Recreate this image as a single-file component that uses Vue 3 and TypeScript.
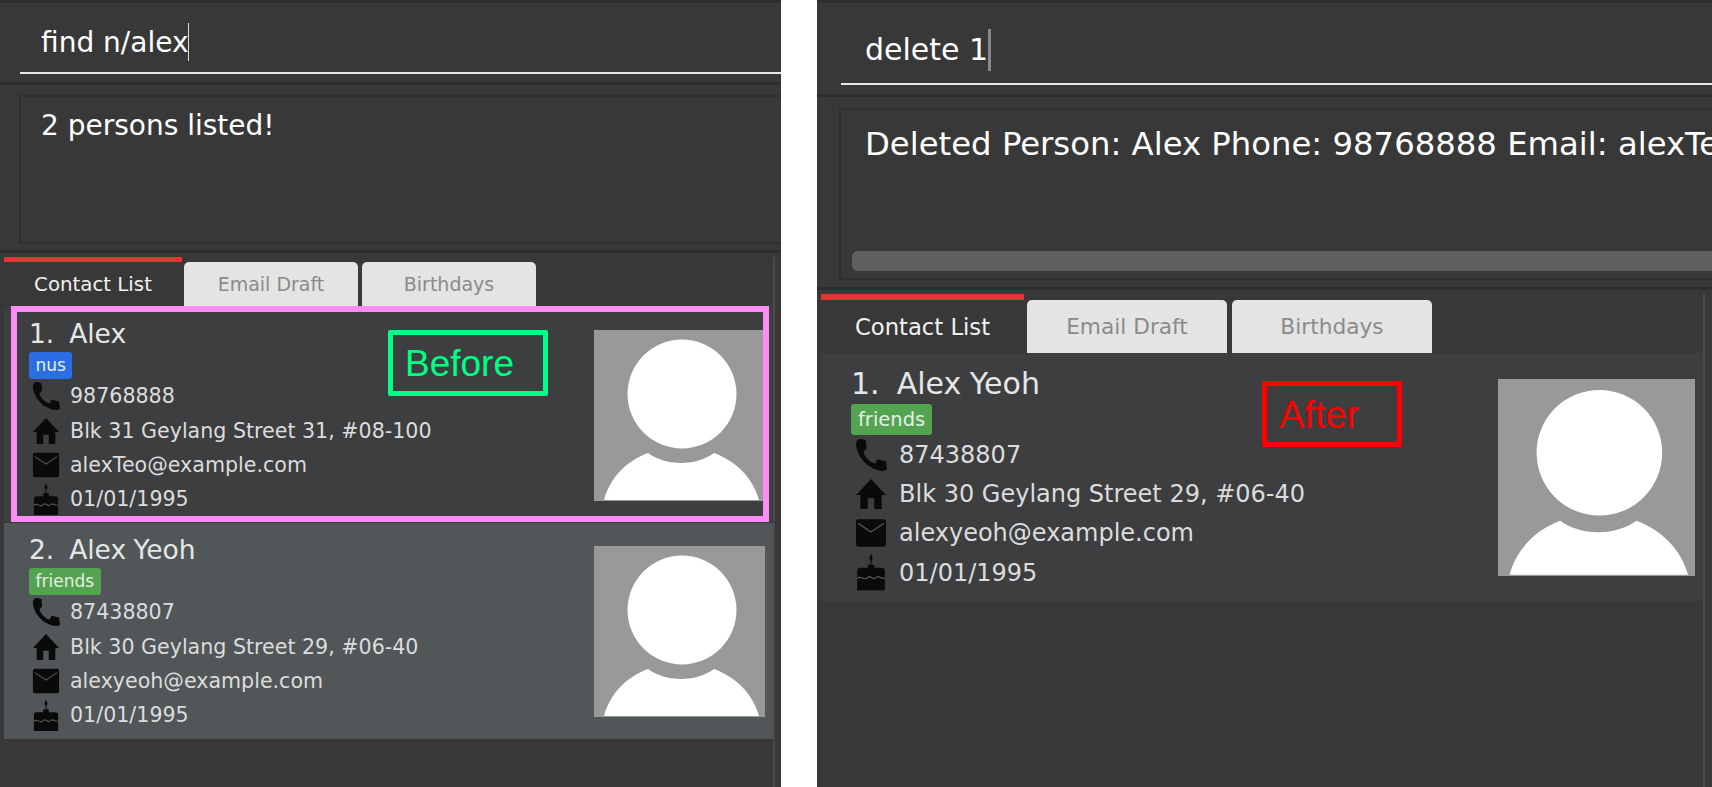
<script setup lang="ts">
interface Person {
    name: string;
    tag: string;
    tagColor: string;
    phone: string;
    address: string;
    email: string;
    birthday: string;
    hovered?: boolean;
}

interface Panel {
    id: string;
    command: string;
    result: string;
    scrollbar: boolean;
    label: string;
    people: Person[];
}

const alex: Person = {
    name: 'Alex',
    tag: 'nus',
    tagColor: '#2a6de4',
    phone: '98768888',
    address: 'Blk 31 Geylang Street 31, #08-100',
    email: 'alexTeo@example.com',
    birthday: '01/01/1995',
};

const yeoh: Person = {
    name: 'Alex Yeoh',
    tag: 'friends',
    tagColor: '#54a351',
    phone: '87438807',
    address: 'Blk 30 Geylang Street 29, #06-40',
    email: 'alexyeoh@example.com',
    birthday: '01/01/1995',
};

const panels: Panel[] = [
    {
        id: 'before',
        command: 'find n/alex',
        result: '2 persons listed!',
        scrollbar: false,
        label: 'Before',
        people: [alex, { ...yeoh, hovered: true }],
    },
    {
        id: 'after',
        command: 'delete 1',
        result: 'Deleted Person: Alex Phone: 98768888 Email: alexTeo@example.com Address: Blk 31 Geylang Street 31, #08-100',
        scrollbar: true,
        label: 'After',
        people: [yeoh],
    },
];
</script>

<template>
    <div class="page">
        <section v-for="panel in panels" :key="panel.id" class="panel" :class="panel.id">
            <div class="command-box">
                <div class="command-line">
                    <span>{{ panel.command }}</span><i class="caret"></i>
                </div>
            </div>

            <div class="result-box">
                <div class="result-inner">
                    <p class="result-text">{{ panel.result }}</p>
                    <div v-if="panel.scrollbar" class="scrollbar"></div>
                </div>
            </div>

            <div class="tab-pane">
                <div class="tabs">
                    <div class="tab active">Contact List</div>
                    <div class="tab">Email Draft</div>
                    <div class="tab">Birthdays</div>
                </div>

                <div class="list">
                    <article v-for="(person, i) in panel.people" :key="person.name" class="card"
                        :class="{ hovered: person.hovered }">
                        <div class="info">
                            <div class="name">{{ i + 1 }}.&nbsp; {{ person.name }}</div>
                            <div class="tag-row">
                                <span class="tag" :style="{ background: person.tagColor }">{{ person.tag }}</span>
                            </div>
                            <div class="row">
                                <span class="icon">
                                    <svg viewBox="0 0 30 30">
                                        <path d="M5 0 L10 1 L11 9 L8 12 C9 17 14 22 19 23 L21 19 L29 21 L30 28 C30 29 28 30 26 30 C13 29 1 17 1 4 C1 2 3 0 5 0 Z" />
                                    </svg>
                                </span>
                                {{ person.phone }}
                            </div>
                            <div class="row">
                                <span class="icon">
                                    <svg viewBox="0 0 30 30">
                                        <path d="M15 1 L29 16 H25 V29 H18 V19 H12 V29 H5 V16 H1 Z" />
                                    </svg>
                                </span>
                                {{ person.address }}
                            </div>
                            <div class="row">
                                <span class="icon">
                                    <svg viewBox="0 0 30 30">
                                        <rect x="1" y="2" width="28" height="26" rx="2" />
                                        <path class="cut" d="M3 6 L15 14 L27 6" />
                                    </svg>
                                </span>
                                {{ person.email }}
                            </div>
                            <div class="row">
                                <span class="icon">
                                    <svg viewBox="0 0 30 34">
                                        <path d="M15 0 C17 3 17 5 15.5 6 L15.5 10 H18 V13 H25 C27 13 28 14 28 16 V34 H2 V16 C2 14 3 13 5 13 H12 V10 H14.5 V6 C13 5 13 3 15 0 Z" />
                                        <path class="cut" d="M2 23 C6 19 8 26 12 22 C15 19 17 26 20 22 C23 19 25 25 28 22" />
                                    </svg>
                                </span>
                                {{ person.birthday }}
                            </div>
                        </div>
                        <svg class="avatar" viewBox="0 0 171 171">
                            <rect width="171" height="171" fill="#999" />
                            <circle cx="88" cy="64" r="54.5" fill="#fff" />
                            <path fill="#fff"
                                d="M10 170 C16 148 32 131 54 123 C62 129 74 133 87 133 C100 133 112 129 120 123 C142 131 159 148 165 170 Z" />
                        </svg>
                    </article>
                </div>
                <div class="pane-edge"></div>
            </div>

            <div class="note">{{ panel.label }}</div>
            <div v-if="panel.id === 'before'" class="selection"></div>
        </section>
    </div>
</template>

<style>
html,
body {
    margin: 0;
    background: #fff;
}
</style>

<style scoped>
.page {
    display: flex;
    gap: 36px;
    height: 787px;
    overflow: hidden;
    font-family: "DejaVu Sans", "Liberation Sans", sans-serif;
}

.panel {
    position: relative;
    display: flex;
    flex-direction: column;
    background: #383838;
    overflow: hidden;
}

.before {
    width: 781px;
    --cmd-h: 85px;
    --cmd-left: 20px;
    --cmd-pad: 21px;
    --cmd-line: 68px;
    --cmd-text-top: 6px;
    --cmd-size: 28px;
    --res-h: 168px;
    --res-margin: 10px 0 6px 19px;
    --res-size: 28px;
    --res-top: 9px;
    --res-pad: 20px;
    --tab-top: 4px;
    --active-w: 178px;
    --tab-w: 174px;
    --tab-h: 44px;
    --tab-gap: 4px;
    --tab-size: 19px;
    --active-size: 19.8px;
    --bar-h: 5px;
    --pane-w: 773px;
    --card-h: 216px;
    --card-left: 25px;
    --name-size: 26.5px;
    --name-line: 32px;
    --name-top: 12px;
    --tag-h: 27px;
    --tag-size: 17px;
    --tag-pad: 6.5px;
    --row-h: 34.4px;
    --row-size: 20.6px;
    --icon-box: 41px;
    --icon-pad: 3px;
    --icon-w: 28px;
    --avatar: 171px;
    --avatar-top: 24px;
}

.after {
    flex: 1;
    --cmd-h: 97px;
    --cmd-left: 24px;
    --cmd-pad: 24px;
    --cmd-line: 79px;
    --cmd-text-top: 10px;
    --cmd-size: 30px;
    --res-h: 193px;
    --res-margin: 11px 0 7px 22px;
    --res-size: 32.3px;
    --res-top: 12px;
    --res-pad: 24px;
    --tab-top: 4px;
    --active-w: 203px;
    --tab-w: 200px;
    --tab-h: 53px;
    --tab-gap: 5px;
    --tab-size: 21.7px;
    --active-size: 22.7px;
    --bar-h: 6px;
    --pane-w: 886px;
    --card-h: 248px;
    --card-left: 30px;
    --name-size: 30px;
    --name-line: 36px;
    --name-top: 13px;
    --tag-h: 31px;
    --tag-size: 19.5px;
    --tag-pad: 7px;
    --row-h: 39.3px;
    --row-size: 24px;
    --icon-box: 48px;
    --icon-pad: 4px;
    --icon-w: 32px;
    --avatar: 197px;
    --avatar-top: 26px;
}

.command-box {
    height: var(--cmd-h);
    flex-shrink: 0;
    box-sizing: border-box;
    padding: 3px 0 0 var(--cmd-left);
    border-top: 3px solid #2e2e2e;
    border-bottom: 3px solid #2e2e2e;
}

.command-line {
    height: var(--cmd-line);
    box-sizing: border-box;
    padding: var(--cmd-text-top) 0 0 var(--cmd-pad);
    border-bottom: 2px solid #e8e8e8;
    display: flex;
    align-items: center;
    color: #fff;
    font-size: var(--cmd-size);
    white-space: nowrap;
}

.caret {
    width: 1px;
    height: 38px;
    background: #ddd;
}

.after .caret {
    width: 3px;
    height: 42px;
    background: #8a8a8a;
}

.result-box {
    height: var(--res-h);
    flex-shrink: 0;
    box-sizing: border-box;
    display: flex;
    border-bottom: 3px solid #2e2e2e;
}

.result-inner {
    flex: 1;
    min-width: 0;
    margin: var(--res-margin);
    border: 2px solid #2f2f2f;
    border-right: none;
    display: flex;
    flex-direction: column;
    overflow: hidden;
}

.result-text {
    flex: 1;
    margin: 0;
    padding: var(--res-top) 0 0 var(--res-pad);
    color: #fff;
    font-size: var(--res-size);
    line-height: 1.4;
    white-space: nowrap;
}

.scrollbar {
    height: 20px;
    margin: 0 0 7px 11px;
    border-radius: 6px 0 0 6px;
    background: #606060;
}

.tab-pane {
    flex: 1;
    display: flex;
    flex-direction: column;
    width: var(--pane-w);
    padding-top: var(--tab-top);
    box-sizing: border-box;
    position: relative;
}

.pane-edge {
    position: absolute;
    top: 4px;
    bottom: 0;
    right: -2px;
    width: 2px;
    background: #4b4b4b;
}

.tabs {
    display: flex;
    align-items: flex-end;
    gap: var(--tab-gap);
    padding-left: 4px;
    flex-shrink: 0;
}

.tab {
    width: var(--tab-w);
    height: var(--tab-h);
    display: flex;
    align-items: center;
    justify-content: center;
    border-radius: 5px 5px 0 0;
    background: #e4e4e4;
    color: #8b8b8b;
    font-size: var(--tab-size);
}

.tab.active {
    width: var(--active-w);
    height: calc(var(--tab-h) + var(--bar-h));
    box-sizing: border-box;
    margin-right: -2px;
    border-top: var(--bar-h) solid #e53431;
    border-radius: 0;
    background: transparent;
    color: #f2f2f2;
    font-size: var(--active-size);
}

.list {
    flex: 1;
    padding-left: 4px;
}

.card {
    height: var(--card-h);
    box-sizing: border-box;
    display: flex;
    justify-content: space-between;
    padding: var(--name-top) 8px 0 var(--card-left);
    background: #3c3e40;
    color: #dcdcdc;
}

.card.hovered {
    background: #515658;
    margin-top: 1px;
    padding-top: calc(var(--name-top) - 1px);
}

.name {
    height: var(--name-line);
    line-height: var(--name-line);
    font-size: var(--name-size);
    word-spacing: -1px;
    color: #e6e6e6;
    white-space: nowrap;
}

.tag-row {
    margin-top: 2px;
    display: flex;
}

.tag {
    height: var(--tag-h);
    line-height: var(--tag-h);
    padding: 0 var(--tag-pad);
    border-radius: 3px;
    color: #e4efe4;
    font-size: var(--tag-size);
}

.row {
    height: var(--row-h);
    display: flex;
    align-items: center;
    font-size: var(--row-size);
    white-space: nowrap;
}

.icon {
    width: var(--icon-box);
    flex-shrink: 0;
    display: flex;
    padding-left: var(--icon-pad);
    box-sizing: border-box;
}

.icon svg {
    width: var(--icon-w);
    fill: #0a0a0a;
}

.cut {
    fill: none;
    stroke: #555;
    stroke-width: 1.2;
}

.avatar {
    width: var(--avatar);
    height: var(--avatar);
    margin-top: calc(var(--avatar-top) - var(--name-top));
    flex-shrink: 0;
}

.note {
    position: absolute;
    box-sizing: border-box;
    height: 66px;
    display: flex;
    align-items: center;
    padding-top: 2px;
    border: 5px solid;
    border-radius: 2px;
    font-family: "Liberation Sans", sans-serif;
}

.before .note {
    left: 388px;
    top: 330px;
    width: 160px;
    padding-left: 12px;
    border-color: #00ff85;
    color: #00ff85;
    font-size: 37px;
}

.after .note {
    left: 445px;
    top: 381px;
    width: 140px;
    padding-left: 12px;
    border-color: #f00;
    color: #f00;
    font-size: 38px;
}

.selection {
    position: absolute;
    left: 11px;
    top: 306px;
    width: 758px;
    height: 216px;
    box-sizing: border-box;
    border: 6px solid #ff8cf5;
}
</style>
